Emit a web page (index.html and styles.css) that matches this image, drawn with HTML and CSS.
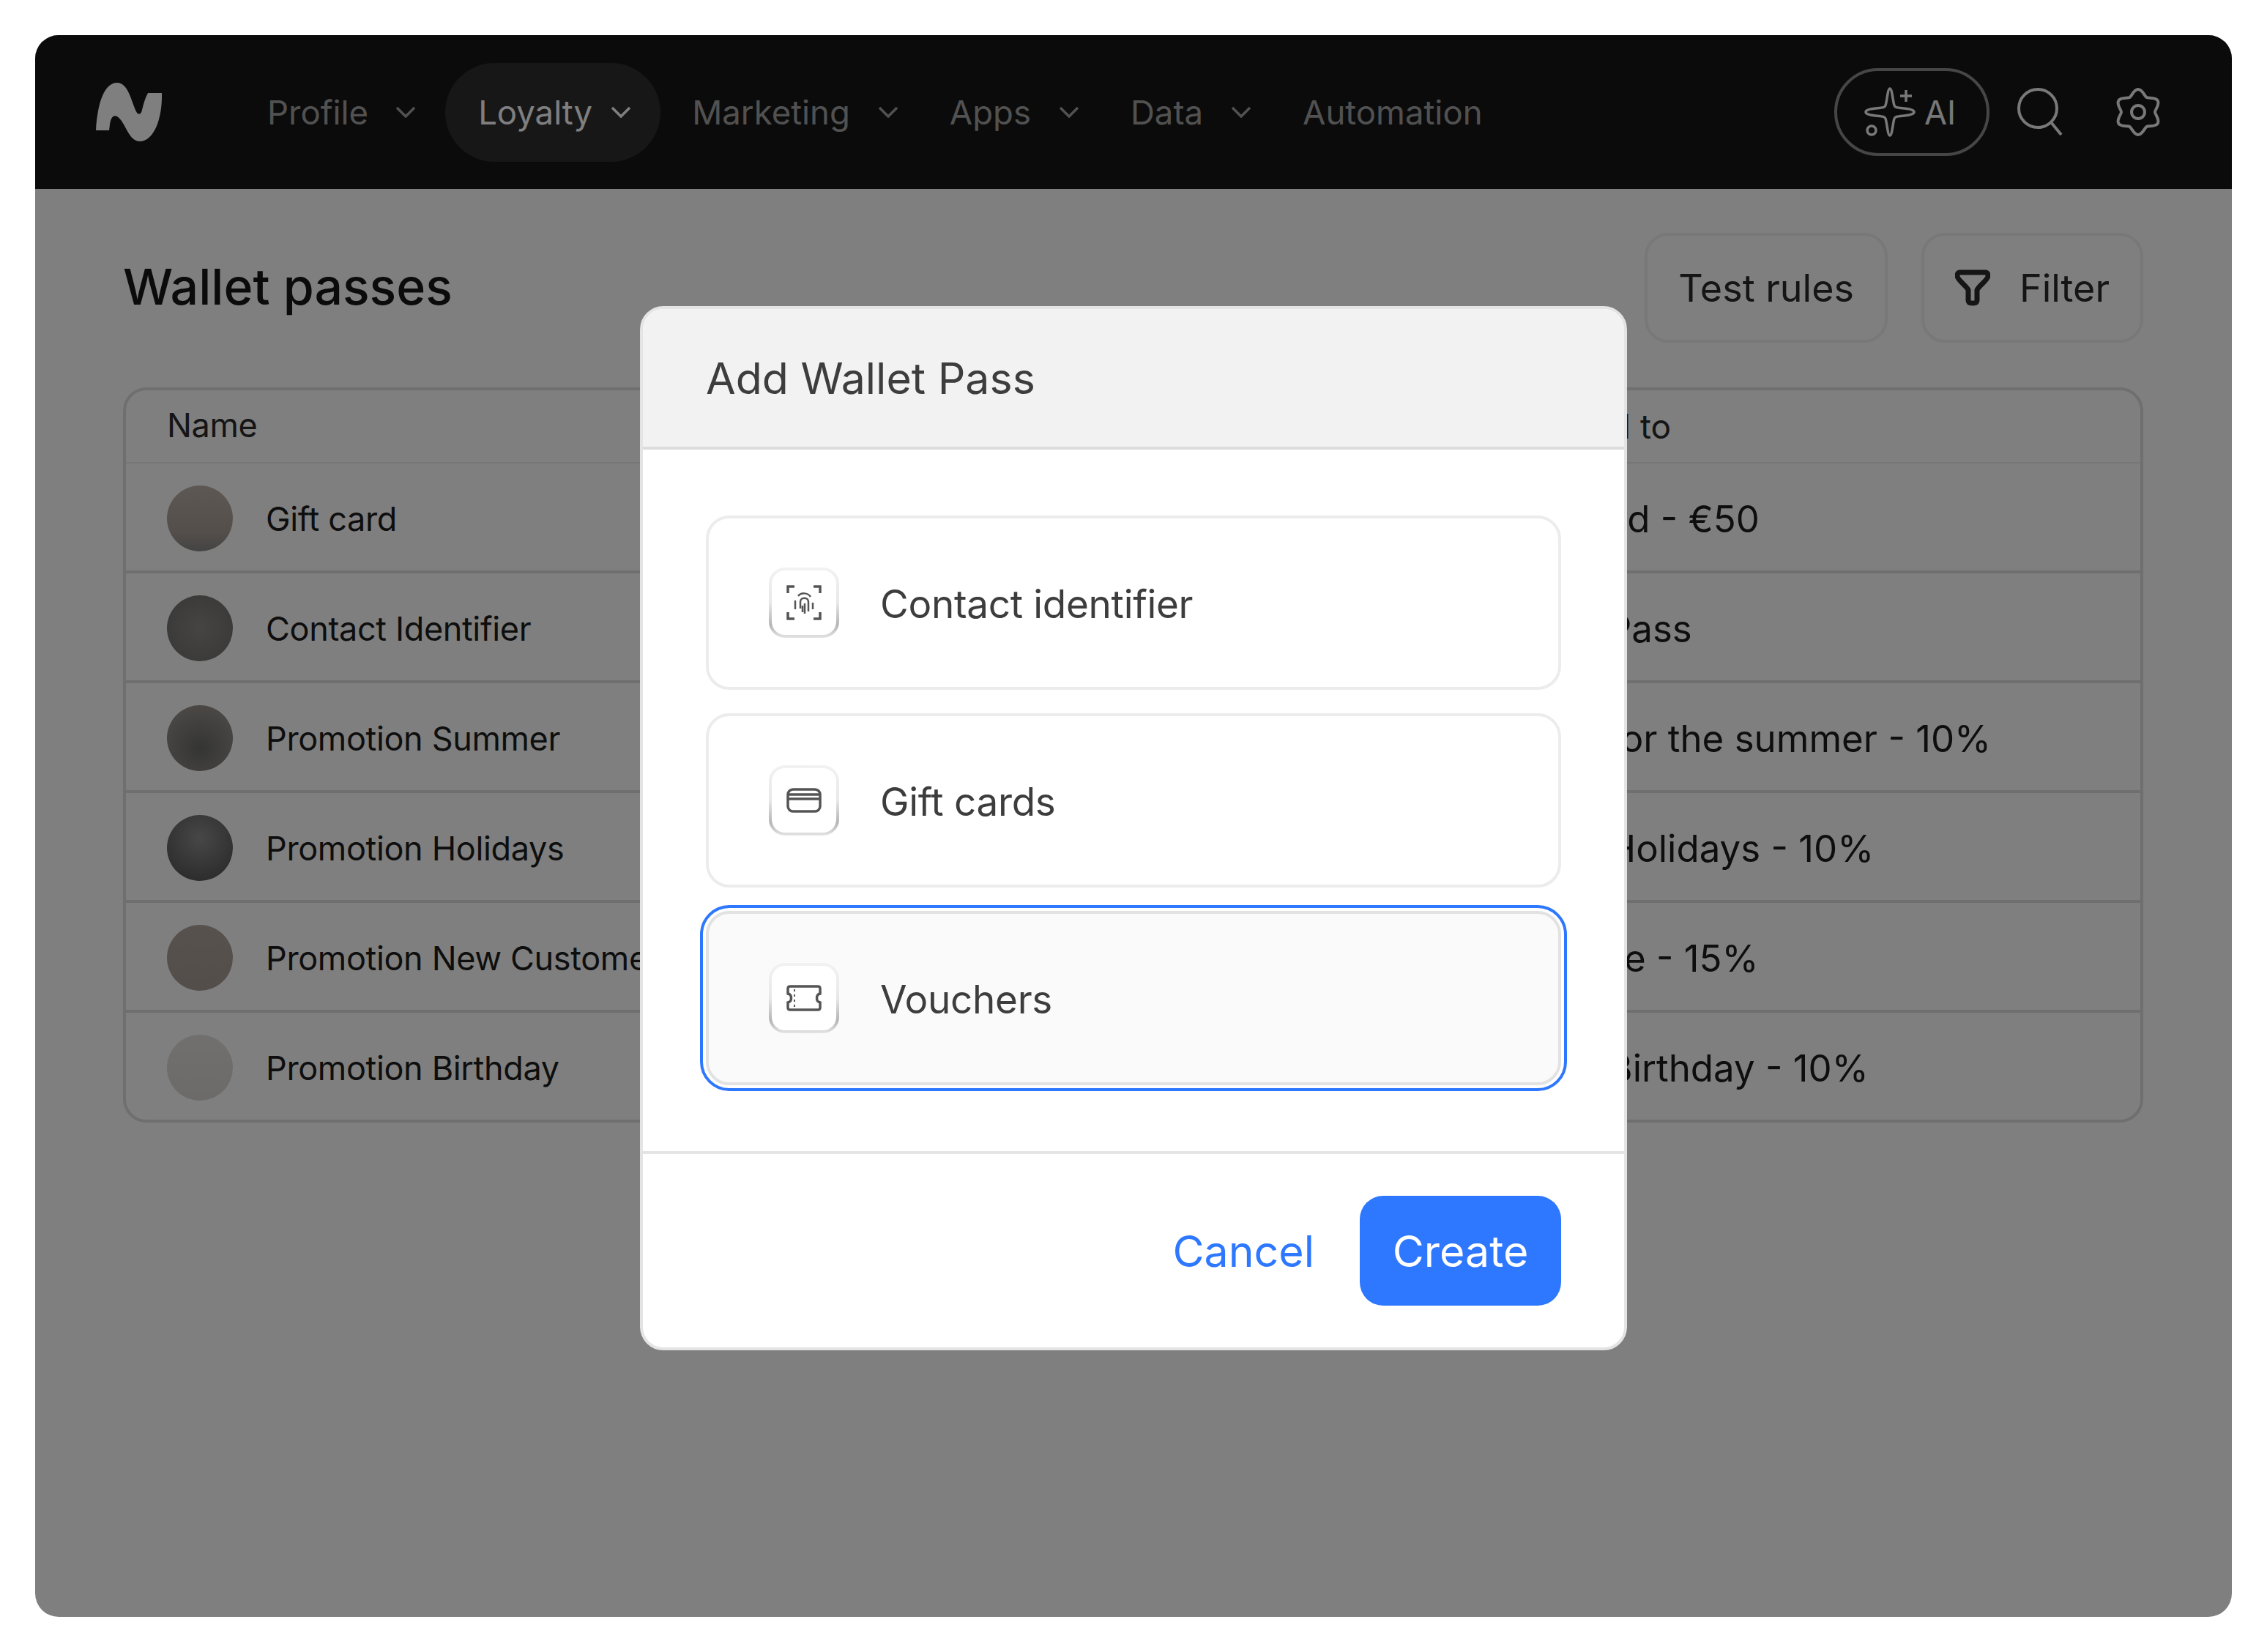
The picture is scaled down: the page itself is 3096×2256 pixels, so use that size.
FILE: index.html
```html
<!DOCTYPE html>
<html lang="en">
<head>
    <meta charset="UTF-8">
    <title>Wallet passes</title>
    <link rel="stylesheet" href="styles.css">
</head>
<body>
    <div class="window">
        <nav class="topbar">
            <svg class="logo" viewBox="0 0 92 82"><path d="M1 66C3 30 12 1 30 1C46 1 50 30 57 42C60 45 63 44 64 38C66 30 68 22 72 15L91 15C92 50 80 81 61 81C45 81 42 55 30 47C24 44 21 50 20 58L19 66Z"/></svg>
            <div class="menu">
                <div class="menu-item">Profile<svg class="chevron" viewBox="0 0 28 16"><path d="M2 2L14 14L26 2"/></svg></div>
                <div class="menu-item active">Loyalty<svg class="chevron" viewBox="0 0 28 16"><path d="M2 2L14 14L26 2"/></svg></div>
                <div class="menu-item">Marketing<svg class="chevron" viewBox="0 0 28 16"><path d="M2 2L14 14L26 2"/></svg></div>
                <div class="menu-item">Apps<svg class="chevron" viewBox="0 0 28 16"><path d="M2 2L14 14L26 2"/></svg></div>
                <div class="menu-item">Data<svg class="chevron" viewBox="0 0 28 16"><path d="M2 2L14 14L26 2"/></svg></div>
                <div class="menu-item">Automation</div>
            </div>
            <div class="topbar-right">
                <div class="ai-button">
                    <svg class="sparkle" viewBox="0 0 80 70">
                        <path d="M40 3C43 3 44 20 46 26C47 29 50 29 60 30C70 31 73 33 73 35C73 37 70 39 60 40C50 41 47 41 46 44C44 50 43 67 40 67C37 67 36 50 34 44C33 41 30 41 20 40C10 39 7 37 7 35C7 33 10 31 20 30C30 29 33 29 34 26C36 20 37 3 40 3Z"/>
                        <path d="M62 5V21M54 13H70"/>
                        <circle cx="15" cy="60" r="6"/>
                    </svg>
                    AI
                </div>
                <svg class="search-icon" viewBox="0 0 64 66"><circle cx="28" cy="28" r="26"/><path d="M46 47L60 64"/></svg>
                <svg class="gear-icon" viewBox="-2 -2 64 70">
                    <path d="M30 2C36 2 38.9 11.6 41.5 13.1C44.1 14.6 53.8 12.3 56.8 17.5C59.8 22.7 53 30 53 33C53 36 59.8 43.3 56.8 48.5C53.8 53.7 44.1 51.4 41.5 52.9C38.9 54.4 36 64 30 64C24 64 21.1 54.4 18.5 52.9C15.9 51.4 6.2 53.7 3.2 48.5C.2 43.3 7 36 7 33C7 30 .2 22.7 3.2 17.5C6.2 12.3 15.9 14.6 18.5 13.1C21.1 11.6 24 2 30 2Z"/>
                    <circle cx="30" cy="33" r="9"/>
                </svg>
            </div>
        </nav>

        <main class="content">
            <div class="page-header">
                <h1>Wallet passes</h1>
                <div class="actions">
                    <button class="ghost-button">Test rules</button>
                    <button class="ghost-button filter-button">
                        <svg class="funnel" viewBox="0 0 48 50"><path d="M7 4H41C44 4 45 6 45 9C45 14 32 23 30 28V42C30 46 27 46 24 46C21 46 18 46 18 42V28C16 23 3 14 3 9C3 6 4 4 7 4Z"/></svg>
                        Filter
                    </button>
                </div>
            </div>

            <div class="passes-table">
                <div class="table-row table-head">
                    <div class="name-cell">Name</div>
                    <div class="linked-cell">Addressed to</div>
                </div>
                <div class="table-row">
                    <div class="name-cell"><span class="avatar avatar-gift"></span>Gift card</div>
                    <div class="linked-cell">Prime card - €50</div>
                </div>
                <div class="table-row">
                    <div class="name-cell"><span class="avatar avatar-contact"></span>Contact Identifier</div>
                    <div class="linked-cell">Contact Pass</div>
                </div>
                <div class="table-row">
                    <div class="name-cell"><span class="avatar avatar-summer"></span>Promotion Summer</div>
                    <div class="linked-cell">Coupon for the summer - 10%</div>
                </div>
                <div class="table-row">
                    <div class="name-cell"><span class="avatar avatar-holidays"></span>Promotion Holidays</div>
                    <div class="linked-cell">Coupon Holidays - 10%</div>
                </div>
                <div class="table-row">
                    <div class="name-cell"><span class="avatar avatar-new"></span>Promotion New Customer</div>
                    <div class="linked-cell">Promo line - 15%</div>
                </div>
                <div class="table-row">
                    <div class="name-cell"><span class="avatar avatar-birthday"></span>Promotion Birthday</div>
                    <div class="linked-cell">Coupon Birthday - 10%</div>
                </div>
            </div>
        </main>

        <div class="overlay">
            <div class="modal">
                <div class="modal-header">Add Wallet Pass</div>
                <div class="modal-body">
                    <div class="pass-option">
                        <span class="option-icon">
                            <svg viewBox="0 0 48 48">
                                <path d="M2 11V2H11M37 2H46V11M2 37V46H11M37 46H46V37"/>
                                <path class="thin" d="M12 21V33M16 15C20 10 29 10 33 16M19 32V23C19 16 30 16 30 23V36M25 25V39M36 24V33M22 28V37"/>
                            </svg>
                        </span>
                        <span class="option-label">Contact identifier</span>
                    </div>
                    <div class="pass-option">
                        <span class="option-icon">
                            <svg viewBox="0 0 48 34"><rect x="2" y="2" width="44" height="30" rx="7"/><path d="M2 9H46M2 15H46"/></svg>
                        </span>
                        <span class="option-label">Gift cards</span>
                    </div>
                    <div class="pass-option selected">
                        <span class="option-icon">
                            <svg viewBox="0 0 48 36">
                                <path d="M5 2H43C45 2 46 3 46 5V12C40 13 40 23 46 24V31C46 33 45 34 43 34H5C3 34 2 33 2 31V24C8 23 8 13 2 12V5C2 3 3 2 5 2Z"/>
                                <path class="dashes" d="M11 6V30"/>
                            </svg>
                        </span>
                        <span class="option-label">Vouchers</span>
                    </div>
                </div>
                <div class="modal-footer">
                    <button class="cancel-button">Cancel</button>
                    <button class="create-button">Create</button>
                </div>
            </div>
        </div>
    </div>
</body>
</html>
```

FILE: styles.css
```css
body {
    margin: 0;
    padding: 48px;
    background-color: white;
    font-family: Inter, "Noto Sans", sans-serif;
}
button {
    font-family: inherit;
    cursor: pointer;
}
.window {
    position: relative;
    width: 3000px;
    height: 2160px;
    border-radius: 32px;
    overflow: hidden;
    background-color: white;
}

/* top bar */
.topbar {
    display: flex;
    align-items: center;
    height: 210px;
    padding: 0 96px 0 82px;
    background-color: #171717;
    color: #a3a3a3;
    box-sizing: border-box;
}
.logo {
    width: 92px;
    height: 82px;
    fill: white;
    margin-right: 108px;
}
.menu {
    display: flex;
    align-items: center;
    font-size: 45.5px;
}
.menu-item {
    display: flex;
    align-items: center;
    gap: 38px;
    height: 135px;
    padding: 0 35px;
    border-radius: 68px;
    white-space: nowrap;
}
.menu-item:first-child {
    gap: 37px;
}
.menu-item.active {
    gap: 25px;
    margin: 0 8px 0 5px;
    padding: 0 40px 0 45px;
    background-color: #2e2e2e;
    color: white;
}
.chevron {
    width: 28px;
    height: 16px;
    fill: none;
    stroke: currentColor;
    stroke-width: 3.5;
}
.topbar-right {
    display: flex;
    align-items: center;
    margin-left: auto;
}
.ai-button {
    display: flex;
    align-items: center;
    gap: 7px;
    box-sizing: border-box;
    width: 212px;
    height: 120px;
    padding-left: 32px;
    border: 4px solid #8c8c8c;
    border-radius: 60px;
    color: #eee;
    font-size: 45px;
}
.sparkle {
    width: 80px;
    height: 70px;
    fill: none;
    stroke: #f2f2f2;
    stroke-width: 3.5;
}
.search-icon {
    width: 64px;
    height: 66px;
    margin-left: 38px;
    fill: none;
    stroke: #f2f2f2;
    stroke-width: 4;
}
.gear-icon {
    width: 64px;
    height: 70px;
    margin-left: 69px;
    fill: none;
    stroke: #f2f2f2;
    stroke-width: 4;
}

/* page behind the dialog */
.content {
    padding: 60px 121px 0 120px;
    color: #1c1c1c;
}
.page-header {
    display: flex;
    align-items: center;
    justify-content: space-between;
    height: 150px;
}
.page-header h1 {
    margin: 0;
    padding-bottom: 4px;
    font-size: 68px;
    font-weight: 500;
    color: #171717;
}
.actions {
    display: flex;
    gap: 46px;
}
.ghost-button {
    display: flex;
    align-items: center;
    gap: 40px;
    height: 150px;
    padding: 0 42px;
    border: 4px solid #f0f0f0;
    border-radius: 32px;
    background: none;
    color: #2a2a2a;
    font-size: 52px;
}
.funnel {
    width: 48px;
    height: 50px;
    fill: none;
    stroke: #2a2a2a;
    stroke-width: 7;
}
.passes-table {
    margin-top: 61px;
    border: 4px solid #dedede;
    border-radius: 32px;
}
.table-row {
    display: grid;
    grid-template-columns: 1820px 1fr;
    align-items: center;
    height: 150px;
    padding-top: 4px;
    box-sizing: border-box;
    border-bottom: 4px solid #dedede;
    font-size: 45px;
    letter-spacing: -0.35px;
}
.table-row:last-child {
    height: 146px;
    border-bottom: none;
}
.table-head {
    height: 100px;
    padding-top: 0;
    border-bottom: 2px solid #ececec;
    color: #2a2a2a;
}
.name-cell {
    display: flex;
    align-items: center;
    gap: 45px;
    padding-left: 56px;
    white-space: nowrap;
}
.linked-cell {
    font-size: 51px;
    letter-spacing: 0;
    white-space: nowrap;
}
.table-head .name-cell {
    padding-bottom: 4px;
}
.table-head .linked-cell {
    font-size: 46px;
}
.avatar {
    flex: none;
    width: 90px;
    height: 90px;
    border-radius: 50%;
}
.avatar-gift { background: linear-gradient(#bcb0a8, #a99e97 70%, #888); }
.avatar-contact { background: radial-gradient(circle, #8f8a86, #6e6e6e); }
.avatar-summer { background: radial-gradient(circle at 50% 65%, #6a6a6a, #a29a94); }
.avatar-holidays { background: radial-gradient(circle at 50% 35%, #8f8f8f, #4c4c4c); }
.avatar-new { background: linear-gradient(#b0a49d, #a89c96); }
.avatar-birthday { background: linear-gradient(#e4e0dd, #d9d6d4); }

/* dialog */
.overlay {
    position: absolute;
    inset: 0;
    display: flex;
    align-items: center;
    justify-content: center;
    padding-top: 6px;
    box-sizing: border-box;
    background-color: rgba(0, 0, 0, 0.5);
}
.modal {
    width: 1348px;
    box-sizing: border-box;
    border: 4px solid #e4e4e4;
    border-radius: 32px;
    overflow: hidden;
    background-color: white;
    color: #3d3d3d;
}
.modal-header {
    display: flex;
    align-items: center;
    height: 188px;
    padding-left: 86px;
    border-bottom: 4px solid #dcdcdc;
    background-color: #f2f2f2;
    font-size: 59px;
}
.modal-body {
    display: flex;
    flex-direction: column;
    gap: 32px;
    padding: 90px 86px;
}
.pass-option {
    display: flex;
    align-items: center;
    gap: 56px;
    height: 238px;
    box-sizing: border-box;
    padding-left: 82px;
    border: 4px solid #ececec;
    border-radius: 32px;
    font-size: 53px;
    letter-spacing: -0.3px;
}
.option-label {
    padding-top: 3px;
}
.pass-option.selected {
    border-color: #e2e2e2;
    background-color: #fafafa;
    outline: 4px solid #2e77ff;
    outline-offset: 4px;
}
.option-icon {
    display: flex;
    align-items: center;
    justify-content: center;
    width: 96px;
    height: 96px;
    box-sizing: border-box;
    border: 4px solid transparent;
    border-radius: 22px;
    background: linear-gradient(white, white) padding-box,
        linear-gradient(#f2f2f2, #e8e8e8 50%, #b4b4b4 82%, #e4e4e4) border-box;
}
.option-icon svg {
    width: 48px;
    fill: none;
    stroke: #555;
    stroke-width: 3.5;
}
.option-icon .thin {
    stroke-width: 2.5;
}
.option-icon .dashes {
    stroke-width: 2;
    stroke-dasharray: 3 4;
}
.modal-footer {
    display: flex;
    align-items: center;
    justify-content: flex-end;
    gap: 62px;
    height: 264px;
    padding-right: 86px;
    border-top: 4px solid #e4e4e4;
}
.cancel-button {
    padding: 0;
    border: none;
    background: none;
    color: #2e77ff;
    font-size: 59px;
}
.create-button {
    width: 275px;
    height: 150px;
    border: none;
    border-radius: 32px;
    background-color: #2e77ff;
    color: white;
    font-size: 59px;
}
```
